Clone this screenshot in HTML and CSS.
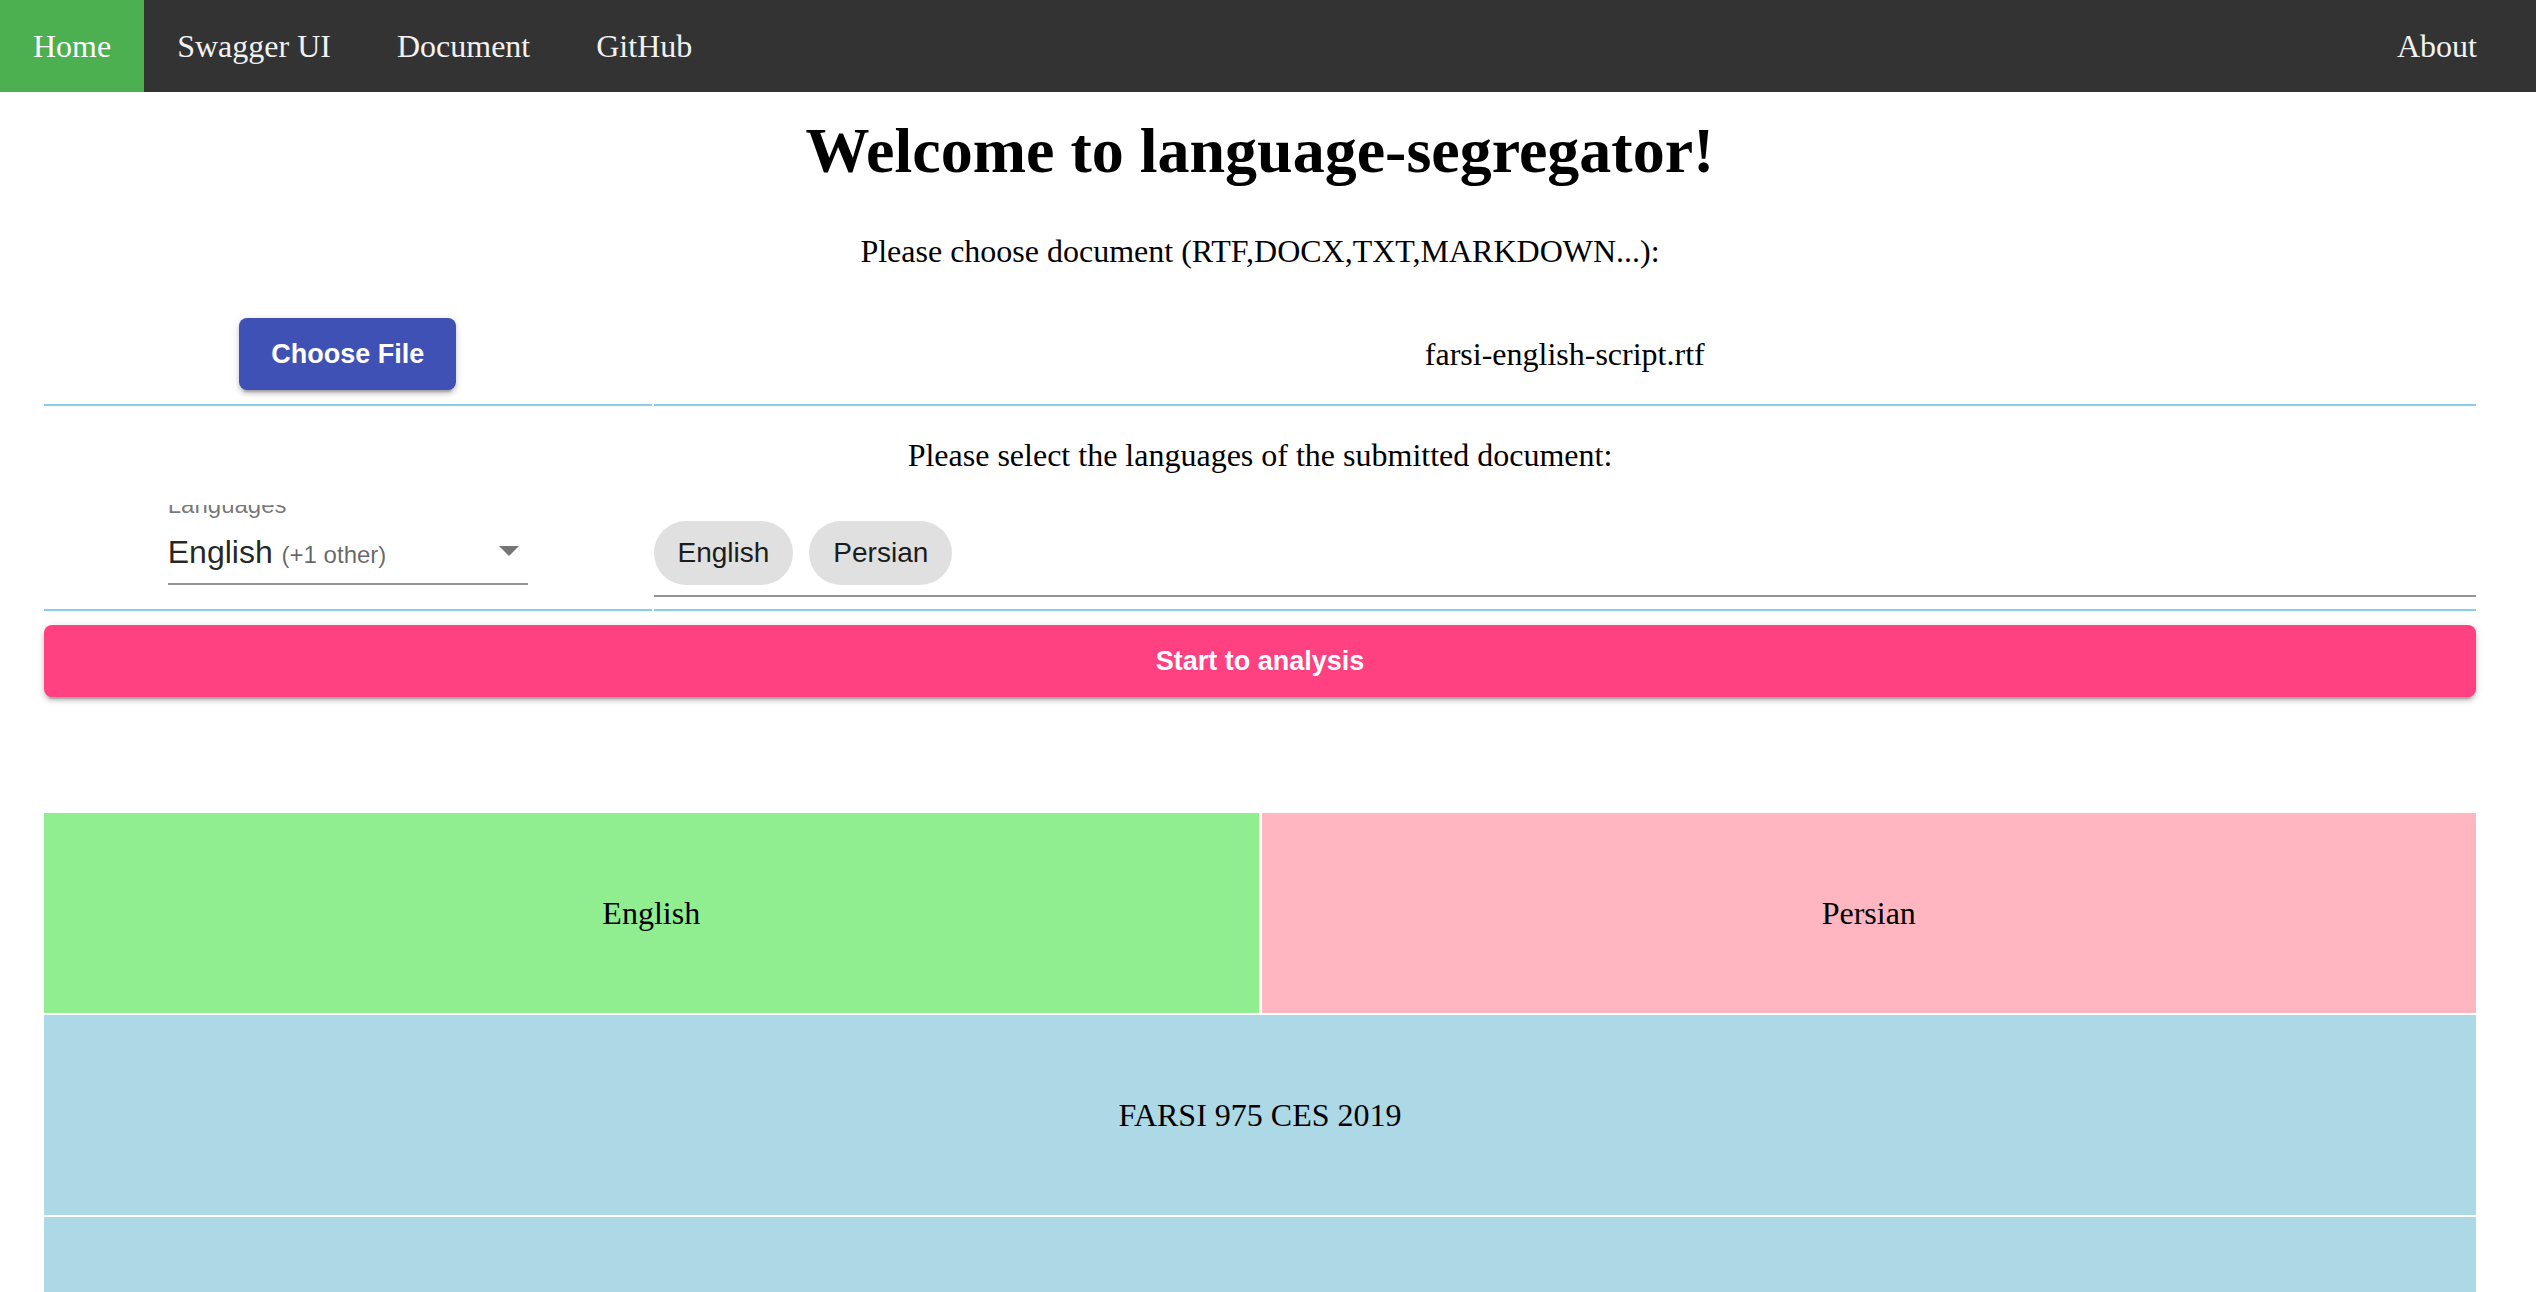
FILE: index.html
```html
<!DOCTYPE html>
<html lang="en">
<head>
<meta charset="utf-8">
<title>language-segregator</title>
<link rel="stylesheet" href="styles.css">
</head>
<body>
<nav class="topnav">
  <a class="nav-link active" href="#">Home</a>
  <a class="nav-link" href="#">Swagger UI</a>
  <a class="nav-link" href="#">Document</a>
  <a class="nav-link" href="#">GitHub</a>
  <a class="nav-link nav-right" href="#">About</a>
</nav>
<main class="page">
  <h1 class="title">Welcome to language-segregator!</h1>
  <p class="prompt prompt-file">Please choose document (RTF,DOCX,TXT,MARKDOWN...):</p>
  <div class="grid-row row-file">
    <div class="cell cell-center"><button class="btn btn-primary" type="button">Choose File</button></div>
    <div class="cell cell-center"><span class="filename">farsi-english-script.rtf</span></div>
  </div>
  <p class="prompt prompt-lang">Please select the languages of the submitted document:</p>
  <div class="grid-row row-lang">
    <div class="cell cell-select">
      <div class="select">
        <div class="select-label">Languages</div>
        <div class="select-input">
          <span class="select-value">English</span> <span class="select-extra">(+1 other)</span>
          <svg class="select-arrow" viewBox="0 0 20 10" width="20" height="10"><path d="M0 0 L20 0 L10 10 Z" fill="#757575"/></svg>
        </div>
      </div>
    </div>
    <div class="cell cell-chips">
      <div class="chip-input">
        <span class="chip">English</span>
        <span class="chip">Persian</span>
      </div>
    </div>
  </div>
  <button class="btn btn-accent btn-block" type="button">Start to analysis</button>
  <div class="treemap">
    <div class="tile tile-en">English</div>
    <div class="tile tile-fa">Persian</div>
    <div class="tile tile-mixed tile-wide">FARSI 975 CES 2019</div>
    <div class="tile tile-mixed tile-wide"></div>
  </div>
</main>
</body>
</html>
```

FILE: styles.css
```css
html {
  scrollbar-width: none;
}
html::-webkit-scrollbar {
  display: none;
}
body {
  margin: 0;
  font-family: "Liberation Serif", "Times New Roman", serif;
  color: #000;
  background: #fff;
}

/* top navigation */
.topnav {
  display: flex;
  background: #333333;
  height: 92px;
  padding-right: 27px;
}
.nav-link {
  display: block;
  padding: 28px 33px;
  font-size: 32px;
  line-height: 36px;
  color: #f2f2f2;
  text-decoration: none;
}
.nav-link.active {
  background: #4caf50;
  color: #fff;
}
.nav-right {
  margin-left: auto;
  padding-right: 32px;
}

/* page */
.page {
  padding: 0 60px 0 44px;
}
.title {
  margin: 23px 0 46px;
  font-size: 64px;
  line-height: 72px;
  font-weight: bold;
  text-align: center;
}
.prompt {
  margin: 0;
  font-size: 32px;
  line-height: 36px;
  text-align: center;
}
.prompt-file {
  margin-bottom: 33px;
}
.prompt-lang {
  margin-top: 31px;
  margin-bottom: 32px;
}

/* grid rows */
.grid-row {
  display: grid;
  grid-template-columns: 1fr 3fr;
  column-gap: 2px;
}
.cell {
  border-bottom: 2px solid #87ceeb;
  overflow: hidden;
}
.cell-center {
  display: flex;
  align-items: center;
  justify-content: center;
  padding: 16px 0 14px;
}
.filename {
  font-size: 32px;
  line-height: 36px;
}

/* buttons */
.btn {
  border: none;
  border-radius: 8px;
  font-family: "Liberation Sans", Arial, sans-serif;
  font-weight: bold;
  font-size: 27px;
  color: #fff;
  height: 72px;
  padding: 0 32px;
  box-shadow: 0 6px 2px -4px rgba(0,0,0,0.2), 0 4px 4px 0 rgba(0,0,0,0.14), 0 2px 10px 0 rgba(0,0,0,0.12);
  cursor: pointer;
}
.btn-primary {
  background: #3f51b5;
}
.btn-accent {
  background: #ff4081;
}
.btn-block {
  display: block;
  width: 100%;
  margin-top: 14px;
}

/* select */
.cell-select {
  padding-bottom: 24px;
}
.select {
  width: 360px;
  margin: -12px auto 0;
  font-family: "Liberation Sans", Arial, sans-serif;
}
.select-label {
  font-size: 24px;
  line-height: 24px;
  color: rgba(0,0,0,0.54);
  margin-bottom: 16px;
}
.select-input {
  position: relative;
  height: 38px;
  padding-bottom: 12px;
  border-bottom: 2px solid #949494;
  font-size: 32px;
  line-height: 38px;
  white-space: nowrap;
}
.select-value {
  color: rgba(0,0,0,0.87);
}
.select-extra {
  font-size: 24px;
  color: rgba(0,0,0,0.6);
}
.select-arrow {
  position: absolute;
  right: 9px;
  top: 13px;
}

/* chips */
.cell-chips {
  padding: 16px 0 12px;
}
.chip-input {
  display: flex;
  gap: 16px;
  padding-bottom: 10px;
  border-bottom: 2px solid #949494;
}
.chip {
  display: inline-flex;
  align-items: center;
  height: 64px;
  padding: 0 24px;
  border-radius: 32px;
  background: #e0e0e0;
  font-family: "Liberation Sans", Arial, sans-serif;
  font-size: 28px;
  color: #1c1c1c;
}

/* treemap */
.treemap {
  margin-top: 116px;
  display: grid;
  grid-template-columns: 1fr 1fr;
  grid-auto-rows: 200px;
  gap: 2px 3px;
}
.tile {
  display: flex;
  align-items: center;
  justify-content: center;
  font-size: 32px;
}
.tile-wide {
  grid-column: 1 / -1;
}
.tile-en {
  background: #90ee90;
}
.tile-fa {
  background: #ffb6c1;
}
.tile-mixed {
  background: #add8e6;
}
```
